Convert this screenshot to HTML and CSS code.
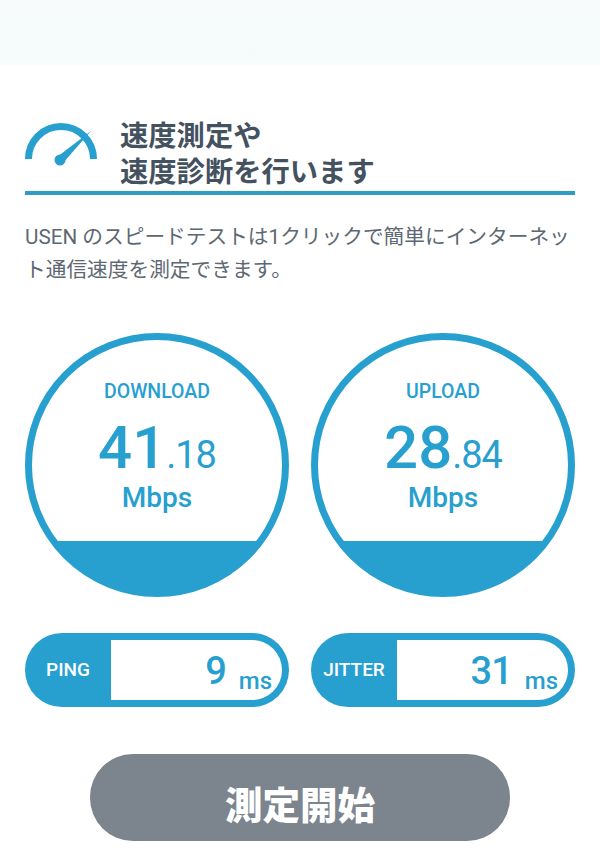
FILE: index.html
```html
<!DOCTYPE html>
<html lang="ja">
<head>
    <meta charset="UTF-8">
    <meta name="viewport" content="width=device-width, initial-scale=1.0">
    <title>速度測定</title>
    <link rel="stylesheet" href="styles.css">
</head>
<body>
    <div class="top-band"></div>
    <div class="container">
        <div class="header">
            <svg class="header-icon" width="72" height="44" viewBox="0 0 72 44">
                <path d="M3.5 36 A32.5 32.5 0 0 1 68.5 36" fill="none" stroke="#27a0d0" stroke-width="7"/>
                <path d="M66 8 L38 40 L32 34 Z" fill="#27a0d0"/>
                <circle cx="35" cy="37" r="5.5" fill="#27a0d0"/>
            </svg>
            <h1>速度測定や<br>速度診断を行います</h1>
        </div>
        <p class="lead">USEN のスピードテストは1クリックで簡単にインターネット通信速度を測定できます。</p>

        <div class="row gauges">
            <div class="gauge">
                <div class="gauge-label">DOWNLOAD</div>
                <div class="gauge-value"><strong>41</strong><span>.18</span></div>
                <div class="gauge-unit">Mbps</div>
            </div>
            <div class="gauge">
                <div class="gauge-label">UPLOAD</div>
                <div class="gauge-value"><strong>28</strong><span>.84</span></div>
                <div class="gauge-unit">Mbps</div>
            </div>
        </div>

        <div class="row pills">
            <div class="pill">
                <div class="pill-label">PING</div>
                <div class="pill-value"><strong>9</strong><span>ms</span></div>
            </div>
            <div class="pill">
                <div class="pill-label">JITTER</div>
                <div class="pill-value"><strong>31</strong><span>ms</span></div>
            </div>
        </div>

        <button type="button" class="start">測定開始</button>
    </div>
</body>
</html>
```

FILE: styles.css
```css
body {
    margin: 0;
    background: #ffffff;
    font-family: Roboto, "Noto Sans CJK JP", sans-serif;
    color: #27a0d0;
}
.top-band {
    height: 65px;
    background: linear-gradient(#f7fbfc, #f5fafb 85%, #fbfdfd);
}
.container {
    padding: 0 25px;
}
.header {
    display: flex;
    align-items: flex-start;
    margin-top: 51px;
    height: 75px;
    border-bottom: 4px solid #2f9cc4;
}
.header-icon {
    margin-top: 7px;
    margin-right: 23px;
}
.header h1 {
    margin: 0;
    font-family: "Noto Sans CJK JP", sans-serif;
    font-size: 28.3px;
    line-height: 36px;
    font-weight: 700;
    color: #44525f;
}
.lead {
    margin: 26px 0 0;
    font-size: 20.7px;
    line-height: 33px;
    color: #5d6872;
}
.row {
    display: flex;
    justify-content: space-between;
}
.gauges {
    margin-top: 46px;
}
/* the gradient is the filled bottom of the circle */
.gauge {
    width: 264px;
    height: 264px;
    box-sizing: border-box;
    border: 7px solid #27a0d0;
    border-radius: 50%;
    background: linear-gradient(#ffffff 208px, #27a0d0 208px) border-box;
    display: flex;
    flex-direction: column;
    align-items: center;
    text-align: center;
}
.gauge-label {
    margin-top: 38px;
    font-size: 19.5px;
    font-weight: 500;
    line-height: 28px;
}
.gauge-value {
    margin-top: 12px;
    line-height: 60px;
    height: 60px;
}
.gauge-value strong {
    font-size: 60px;
    font-weight: 500;
}
.gauge-value span {
    font-size: 38px;
    font-weight: 400;
    letter-spacing: -1px;
}
.gauge-unit {
    margin-top: 3px;
    font-size: 28px;
    font-weight: 500;
    line-height: 34px;
}
.pills {
    margin-top: 36px;
}
.pill {
    width: 264px;
    height: 74px;
    box-sizing: border-box;
    padding: 7px 7px 7px 86px;
    border-radius: 37px;
    background: #27a0d0;
    display: flex;
}
.pill-label {
    width: 86px;
    flex: none;
    margin: -7px 0 -7px -86px;
    color: #ffffff;
    font-size: 19px;
    font-weight: 500;
    line-height: 74px;
    text-align: center;
}
.pill-value {
    flex: 1;
    background: #ffffff;
    border-radius: 0 30px 30px 0;
    display: flex;
    justify-content: flex-end;
    align-items: flex-end;
    padding-right: 10px;
}
.pill-value strong {
    font-size: 38px;
    font-weight: 500;
    letter-spacing: -1px;
    line-height: 42px;
    margin-right: 13px;
    margin-bottom: 8px;
}
.pill-value span {
    font-size: 24px;
    font-weight: 500;
    line-height: 28px;
    margin-bottom: 5px;
}
.start {
    display: block;
    width: 420px;
    height: 87px;
    margin: 47px auto 0;
    padding: 10px 0 0;
    border: none;
    border-radius: 43px;
    background: #7c848d;
    color: #ffffff;
    font-family: "Noto Sans CJK JP", sans-serif;
    font-size: 37.5px;
    line-height: 40px;
    font-weight: 900;
}
```
